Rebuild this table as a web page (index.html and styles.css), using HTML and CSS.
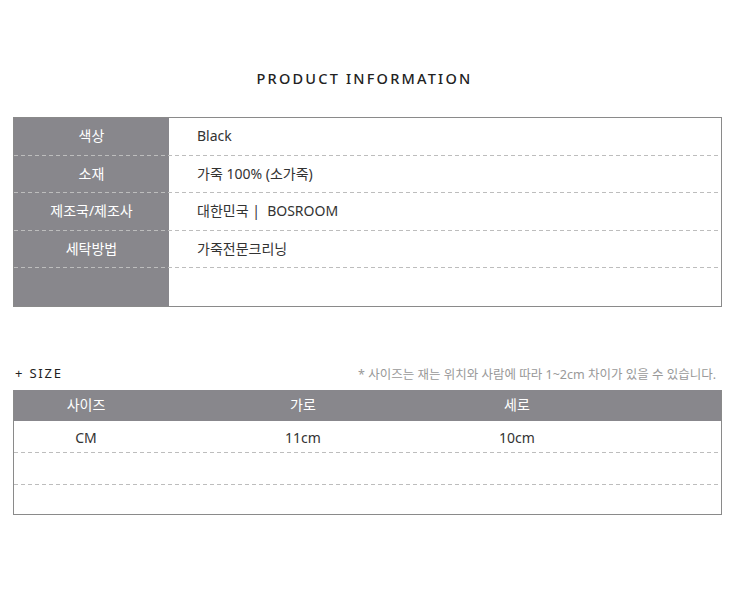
FILE: index.html
```html
<!DOCTYPE html>
<html lang="ko">
<head>
<meta charset="utf-8">
<link rel="stylesheet" href="styles.css">
</head>
<body>
<div class="page">
  <h1 class="title">PRODUCT INFORMATION</h1>

  <div class="info">
    <div class="info-row"><div class="label">색상</div><div class="value">Black</div></div>
    <div class="info-row"><div class="label">소재</div><div class="value">가죽 100% (소가죽)</div></div>
    <div class="info-row"><div class="label">제조국/제조사</div><div class="value">대한민국 |&nbsp; BOSROOM</div></div>
    <div class="info-row"><div class="label">세탁방법</div><div class="value">가죽전문크리닝</div></div>
    <div class="info-row info-last"><div class="label"></div><div class="value"></div></div>
  </div>

  <div class="size-head">
    <span class="size-title">+ SIZE</span>
    <span class="size-note">* 사이즈는 재는 위치와 사람에 따라 1~2cm 차이가 있을 수 있습니다.</span>
  </div>

  <div class="size">
    <div class="size-row size-header"><div>사이즈</div><div>가로</div><div>세로</div><div></div></div>
    <div class="size-row dashed"><div>CM</div><div>11cm</div><div>10cm</div><div></div></div>
    <div class="size-row dashed"><div></div><div></div><div></div><div></div></div>
    <div class="size-row size-last"><div></div><div></div><div></div><div></div></div>
  </div>
</div>
</body>
</html>
```

FILE: styles.css
```css
* { box-sizing: border-box; }
html, body { margin: 0; padding: 0; background: #fff; }
body {
  font-family: "Noto Sans", "Noto Sans CJK KR", sans-serif;
  color: #333;
  width: 738px;
  height: 609px;
}
.page {
  padding: 67px 16px 0 13px;
}
.title {
  margin: 0;
  text-align: center;
  font-size: 14.5px;
  font-weight: 500;
  letter-spacing: 2.2px;
  color: #222;
  line-height: 22px;
  padding-right: 6px;
}
.info {
  margin-top: 28px;
  border: 1px solid #8a8a8a;
  background: linear-gradient(to right, #88878c 0, #88878c 155px, #fff 155px);
}
.info-row {
  display: flex;
  height: 37.5px;
  background-image: repeating-linear-gradient(to right, #bdbdbd 0, #bdbdbd 4px, transparent 4px, transparent 7px);
  background-size: 100% 1px;
  background-position: left bottom;
  background-repeat: no-repeat;
  font-size: 14px;
  line-height: 20px;
}
.info-row.info-last {
  background-image: none;
  height: 38px;
}
.label {
  width: 155px;
  color: #fff;
  text-align: center;
  padding-top: 8px;
}
.value {
  padding-left: 28px;
  padding-top: 8px;
  color: #333;
}
.size-head {
  margin-top: 56px;
  display: flex;
  justify-content: space-between;
  align-items: center;
  height: 20px;
}
.size-title {
  font-size: 13px;
  letter-spacing: 1.8px;
  color: #222;
  padding-left: 2px;
}
.size-note {
  font-size: 12.5px;
  color: #999;
  letter-spacing: 0;
  padding-right: 6px;
}
.size {
  margin-top: 7px;
  border: 1px solid #8a8a8a;
  border-top: none;
}
.size-row {
  display: grid;
  grid-template-columns: 144px 290px 138px 1fr;
  font-size: 14px;
  line-height: 20px;
  text-align: center;
  height: 32px;
  padding-top: 7px;
}
.size-header {
  background: #88878c;
  color: #fff;
  height: 31px;
  padding-top: 5px;
}
.dashed {
  background-image: repeating-linear-gradient(to right, #bdbdbd 0, #bdbdbd 4px, transparent 4px, transparent 7px);
  background-size: 100% 1px;
  background-position: left bottom;
  background-repeat: no-repeat;
}
.size-last { height: 29px; }
```
